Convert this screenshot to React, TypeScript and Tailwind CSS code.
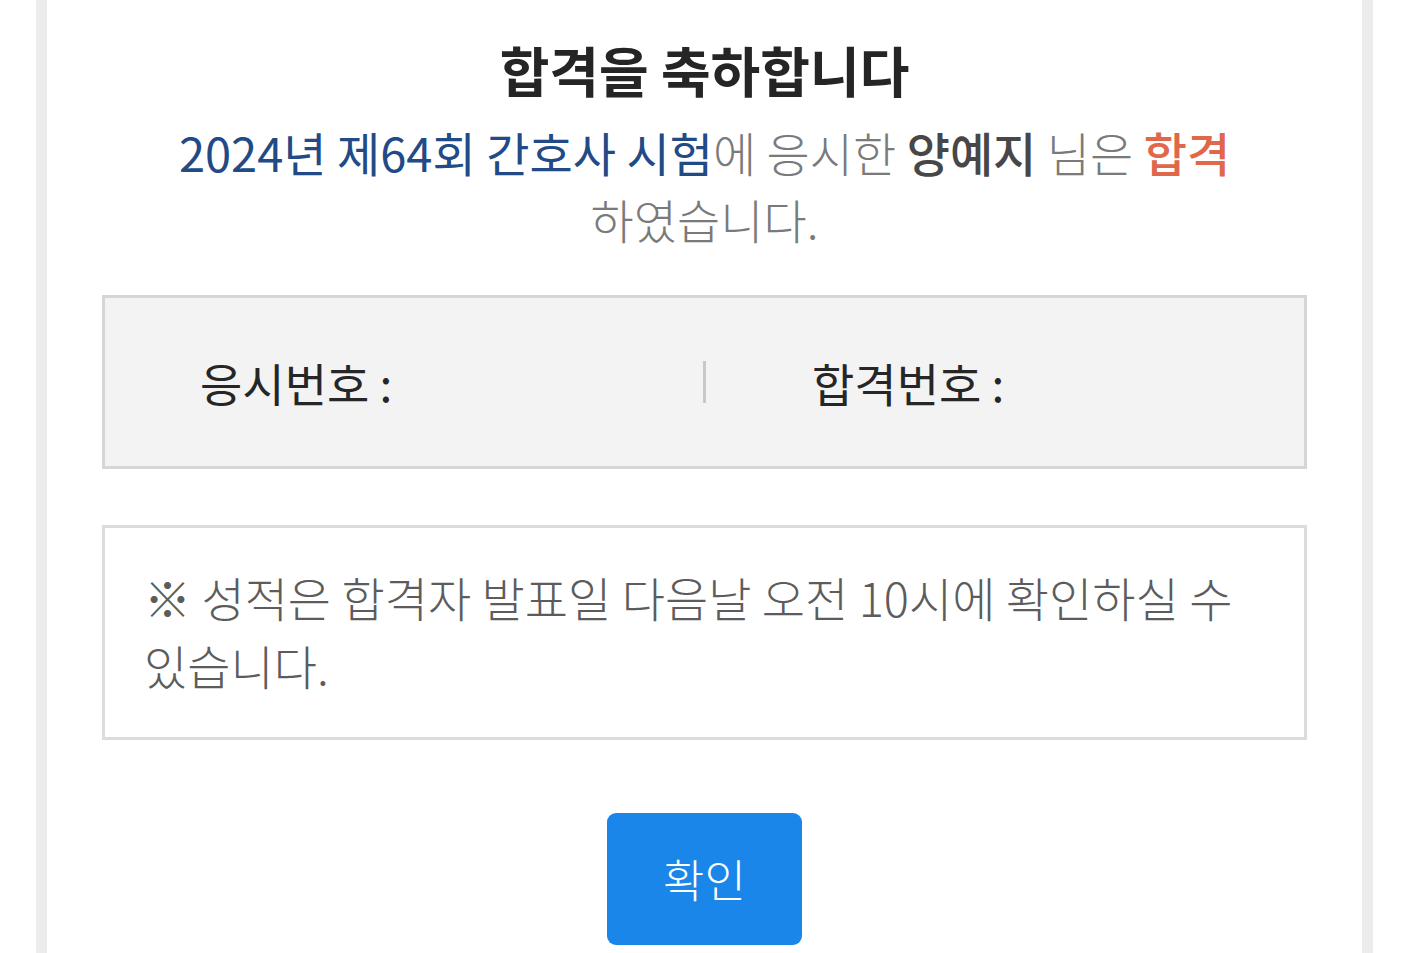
const font = { fontFamily: '"Noto Sans CJK KR", "Noto Sans", sans-serif' };

export default function App() {
  return (
    <div className="flex min-h-screen justify-center bg-white" style={font}>
      <div className="ml-[36px] mr-[35px] flex min-h-[953px] flex-1 flex-col items-center border-x-[11px] border-[#ececec] bg-white px-[55px]">
        <h1 className="mt-[36px] text-[54px] font-bold leading-[68px] text-[#252525]">
          합격을 축하합니다
        </h1>

        <p className="mt-[14px] text-center text-[47px] font-light leading-[67px] text-[#7a7a7a]">
          <span className="font-normal text-[#214a87]">2024년 제64회 간호사 시험</span>에 응시한{" "}
          <span className="font-medium text-[#474747]">양예지</span> 님은{" "}
          <span className="font-medium text-[#e0674a]">합격</span>
          <br />
          하였습니다.
        </p>

        <div className="mt-[43px] grid h-[174px] w-full grid-cols-[1fr_3px_1fr] items-center border-[3px] border-[#d6d6d6] bg-[#f3f3f3] text-[46px] text-[#262626]">
          <div className="pl-[95px]">응시번호 :</div>
          <div className="h-[42px] w-[3px] bg-[#c9c9c9]" />
          <div className="pl-[106px]">합격번호 :</div>
        </div>

        <div className="mt-[56px] w-full break-keep border-[3px] border-[#dcdcdc] bg-white px-[39px] pb-[38px] pt-[35px] text-[47px] font-light leading-[68px] text-[#5c5c5c]">
          ※ 성적은 합격자 발표일 다음날 오전 10시에 확인하실 수 있습니다.
        </div>

        <button
          type="button"
          className="mt-[73px] flex h-[132px] w-[195px] items-center justify-center rounded-[9px] bg-[#1a86ea] text-[45px] font-light text-white"
        >
          확인
        </button>
      </div>
    </div>
  );
}
